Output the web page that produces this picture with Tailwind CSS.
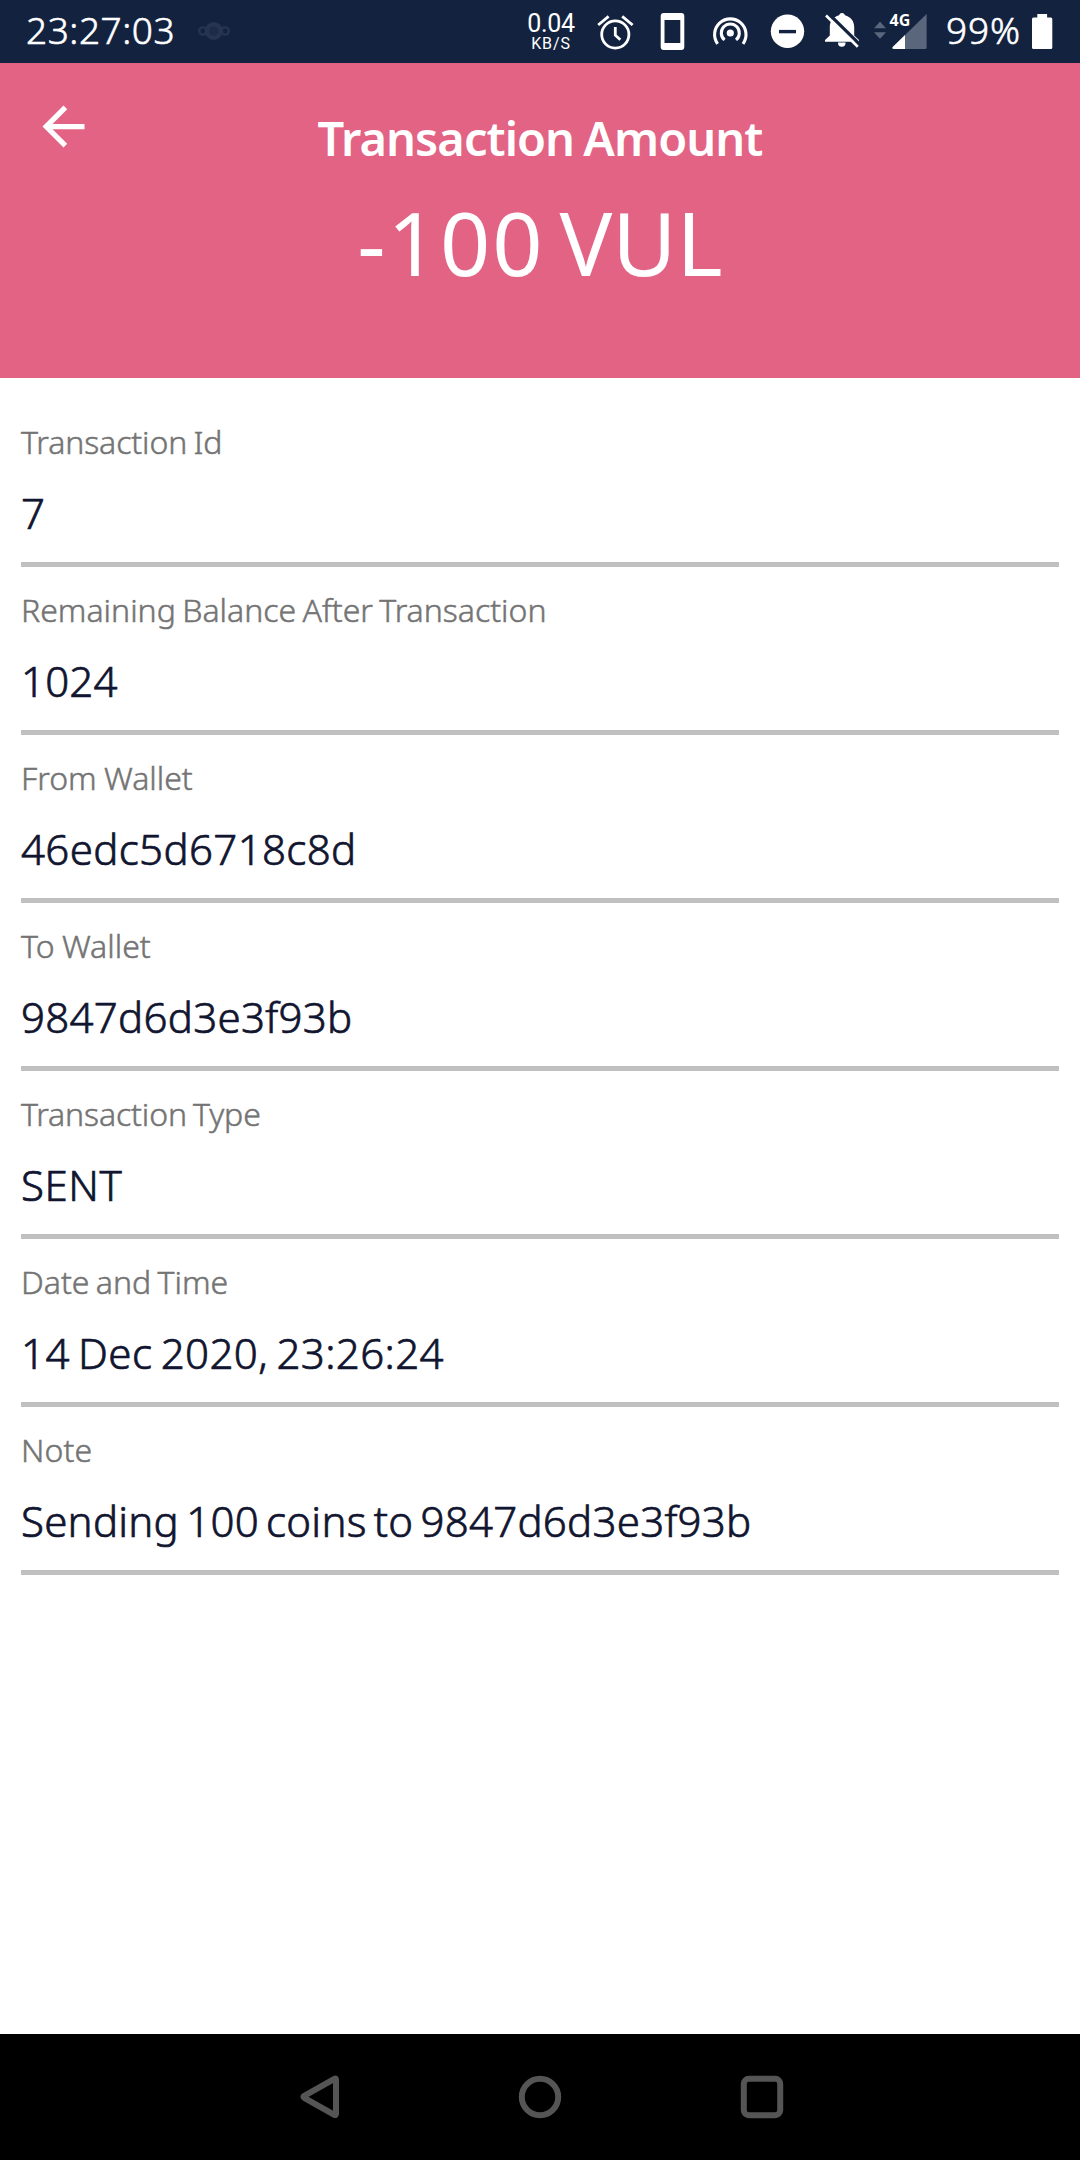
<!DOCTYPE html>
<html lang="en">
<head>
<meta charset="utf-8">
<title>Transaction Amount</title>
<script src="https://cdn.jsdelivr.net/npm/@tailwindcss/browser@4"></script>
</head>
<body class="bg-white">
<div class="flex h-[2160px] w-[1080px] flex-col overflow-hidden font-['Noto_Sans',sans-serif]">
  <!-- Status bar -->
  <div class="flex h-[63px] shrink-0 items-center bg-[#13233f] text-white">
    <div class="w-[170px] shrink-0 self-start pl-[26px] text-[37px] leading-[60px] font-light tracking-[0.55px] whitespace-nowrap [-webkit-text-stroke:0.6px_currentColor]">23:27:03</div>
    <svg class="ml-[20px] h-[63px] w-[50px] shrink-0" viewBox="190 0 50 63" fill="none" stroke="#27344f"><circle cx="213.8" cy="31" r="6.800" stroke-width="4.400" fill="#1d2b48"/><circle cx="202.8" cy="31" r="3.6" stroke-width="2.400"/><circle cx="225.2" cy="31" r="3.6" stroke-width="2.400"/></svg>
    <div class="ml-[281px] flex w-[60px] shrink-0 flex-col items-center font-['Roboto',sans-serif]">
      <span class="text-[25px] leading-[25px] tracking-[-0.3px]">0.04</span>
      <span class="-mt-px text-[16px] leading-[17px] tracking-[0.9px]">KB/S</span>
    </div>
    <svg class="ml-[9px] h-[63px] w-[50px] shrink-0" viewBox="590 0 50 63" fill="none" stroke="#fff" stroke-width="2.8"><circle cx="615.3" cy="34.5" r="13.6"/><path d="M615.3 27v8.2l5 4.6M598.2 25l10.4-8.6M632.6 25l-10.4-8.6"/></svg>
    <svg class="h-[63px] w-[60px] shrink-0" viewBox="640 0 60 63" fill="#fff"><path fill-rule="evenodd" d="M663.7 13h17.6a3 3 0 0 1 3 3v31a3 3 0 0 1-3 3h-17.6a3 3 0 0 1-3-3V16a3 3 0 0 1 3-3zM664.5 20v23h15.8V20z"/></svg>
    <svg class="h-[63px] w-[60px] shrink-0" viewBox="700 0 60 63" fill="none" stroke="#fff" stroke-width="3.1"><circle cx="730.3" cy="33" r="3.6" fill="#fff" stroke="none"/><path d="M724.6 39.9a9 9 0 1 1 11.4 0M717.6 43.8a15.7 15.7 0 1 1 25.4 0"/></svg>
    <svg class="h-[63px] w-[60px] shrink-0" viewBox="760 0 60 63"><circle cx="787.5" cy="31.3" r="16.7" fill="#fff"/><path d="M779 31.6h17" stroke="#13233f" stroke-width="3.4"/></svg>
    <svg class="h-[63px] w-[50px] shrink-0" viewBox="820 0 50 63"><path d="M839 15.2a3.2 3.2 0 0 1 6 0c5.600 1.500 9.200 5.900 9.200 11.800v8.500l4.800 4.500v1.800H825V40l4.800-4.500V27c0-5.900 3.600-10.300 9.200-11.800zM838 42.500h7.600a3.800 4.300 0 0 1-7.600 0z" fill="#fff"/><path d="M828.300 13.500l32 31.500" stroke="#13233f" stroke-width="3.200"/><path d="M826 15.500l31.800 31.200" stroke="#fff" stroke-width="2.600"/></svg>
    <div class="relative h-[63px] w-[70px] shrink-0">
      <svg class="h-[63px] w-[70px]" viewBox="870 0 70 63" fill="#5a667b"><path d="M874 28.200l6-6.400 6 6.400zM874 32.200h12l-6 6.600z"/><path d="M926.600 14v33.500a1.500 1.500 0 0 1-1.500 1.500H893.500q-2-.5-.8-2z"/><path d="M905 35v14h-11.500q-2-.5-.8-2z" fill="#fff"/></svg>
      <span class="absolute top-[10px] left-[19.500px] text-[16px] leading-[20px] font-bold">4G</span>
    </div>
    <div class="w-[80px] shrink-0 self-start pl-[6px] text-[37px] leading-[60px] font-light tracking-[0.9px] whitespace-nowrap [-webkit-text-stroke:0.6px_currentColor]">99%</div>
    <svg class="h-[63px] w-[60px] shrink-0" viewBox="1020 0 60 63" fill="#fff"><path d="M1037.300 14h9.800v3.600h3.700a1.500 1.500 0 0 1 1.500 1.500v28.400a1.500 1.500 0 0 1-1.500 1.500h-17.300a1.500 1.500 0 0 1-1.500-1.500V19.100a1.500 1.500 0 0 1 1.500-1.500h3.800z"/></svg>
  </div>

  <!-- Header -->
  <header class="grid h-[315px] shrink-0 grid-cols-[96px_1fr_96px] bg-[#e36385] text-white">
    <svg class="mt-[32px] ml-[32px] size-[63px]" viewBox="0 0 24 24" fill="#fff"><path d="M20 11H7.830l5.590-5.590L12 4l-8 8 8 8 1.410-1.410L7.830 13H20v-2z"/></svg>
    <div class="flex flex-col items-center pt-[45px] whitespace-nowrap">
      <h1 class="text-[47px] leading-[60px] font-semibold tracking-[-0.95px] [word-spacing:-2px]">Transaction Amount</h1>
      <p class="mt-[24px] text-[88px] leading-[100px] [word-spacing:-8px]"><span class="tracking-[2px]">-100</span> VUL</p>
    </div>
  </header>

  <!-- Details -->
  <main class="flex grow flex-col bg-white px-[21px] pt-[21px] font-light whitespace-nowrap">
    <section class="h-[168px] border-b-[5px] border-[#c0c0c0] pt-[23px]">
      <h2 class="text-[32px] leading-[40px] tracking-[-0.1px] text-[#747474] [-webkit-text-stroke:0.5px_currentColor] [word-spacing:-2px]">Transaction Id</h2>
      <p class="mt-[23px] text-[42px] leading-[56px] text-[#11152f] [-webkit-text-stroke:0.7px_currentColor]">7</p>
    </section>
    <section class="h-[168px] border-b-[5px] border-[#c0c0c0] pt-[23px]">
      <h2 class="text-[32px] leading-[40px] text-[#747474] [-webkit-text-stroke:0.5px_currentColor] [word-spacing:-2px]">Remaining Balance After Transaction</h2>
      <p class="mt-[23px] text-[42px] leading-[56px] tracking-[0.2px] text-[#11152f] [-webkit-text-stroke:0.7px_currentColor]">1024</p>
    </section>
    <section class="h-[168px] border-b-[5px] border-[#c0c0c0] pt-[23px]">
      <h2 class="text-[32px] leading-[40px] text-[#747474] [-webkit-text-stroke:0.5px_currentColor] [word-spacing:-1px]">From Wallet</h2>
      <p class="mt-[23px] text-[42px] leading-[56px] tracking-[0.36px] text-[#11152f] [-webkit-text-stroke:0.7px_currentColor]">46edc5d6718c8d</p>
    </section>
    <section class="h-[168px] border-b-[5px] border-[#c0c0c0] pt-[23px]">
      <h2 class="text-[32px] leading-[40px] text-[#747474] [-webkit-text-stroke:0.5px_currentColor] [word-spacing:-1px]">To Wallet</h2>
      <p class="mt-[23px] text-[42px] leading-[56px] tracking-[0.28px] text-[#11152f] [-webkit-text-stroke:0.7px_currentColor]">9847d6d3e3f93b</p>
    </section>
    <section class="h-[168px] border-b-[5px] border-[#c0c0c0] pt-[23px]">
      <h2 class="text-[32px] leading-[40px] tracking-[-0.13px] text-[#747474] [-webkit-text-stroke:0.5px_currentColor] [word-spacing:-2px]">Transaction Type</h2>
      <p class="mt-[23px] text-[42px] leading-[56px] tracking-[0.6px] text-[#11152f] [-webkit-text-stroke:0.7px_currentColor]">SENT</p>
    </section>
    <section class="h-[168px] border-b-[5px] border-[#c0c0c0] pt-[23px]">
      <h2 class="text-[32px] leading-[40px] text-[#747474] [-webkit-text-stroke:0.5px_currentColor] [word-spacing:-2px]">Date and Time</h2>
      <p class="mt-[23px] text-[42px] leading-[56px] tracking-[0.4px] text-[#11152f] [-webkit-text-stroke:0.7px_currentColor] [word-spacing:-3px]">14 Dec 2020, 23:26:24</p>
    </section>
    <section class="h-[168px] border-b-[5px] border-[#c0c0c0] pt-[23px]">
      <h2 class="text-[32px] leading-[40px] tracking-[0.1px] text-[#747474] [-webkit-text-stroke:0.5px_currentColor]">Note</h2>
      <p class="mt-[23px] text-[42px] leading-[56px] tracking-[0.25px] text-[#11152f] [-webkit-text-stroke:0.7px_currentColor] [word-spacing:-4px]">Sending 100 coins to 9847d6d3e3f93b</p>
    </section>
  </main>

  <!-- Navigation bar -->
  <nav class="flex h-[126px] shrink-0 items-center bg-black">
    <svg class="ml-[290px] h-[126px] w-[60px]" viewBox="290 2034 60 126" fill="none" stroke="#555" stroke-width="6" stroke-linejoin="round"><path d="M336 2079.500v34.500q0 1.600-1.600.8l-30.200-17q-1.600-1 0-2l30.200-17q1.600-.9 1.600.7z"/></svg>
    <svg class="ml-[160px] h-[126px] w-[60px]" viewBox="510 2034 60 126" fill="none" stroke="#555" stroke-width="6"><circle cx="540" cy="2097" r="18.200"/></svg>
    <svg class="ml-[162px] h-[126px] w-[60px]" viewBox="732 2034 60 126" fill="none" stroke="#555" stroke-width="6"><rect x="743.800" y="2078.800" width="36.400" height="36.400" rx="5"/></svg>
  </nav>
</div>
</body>
</html>
